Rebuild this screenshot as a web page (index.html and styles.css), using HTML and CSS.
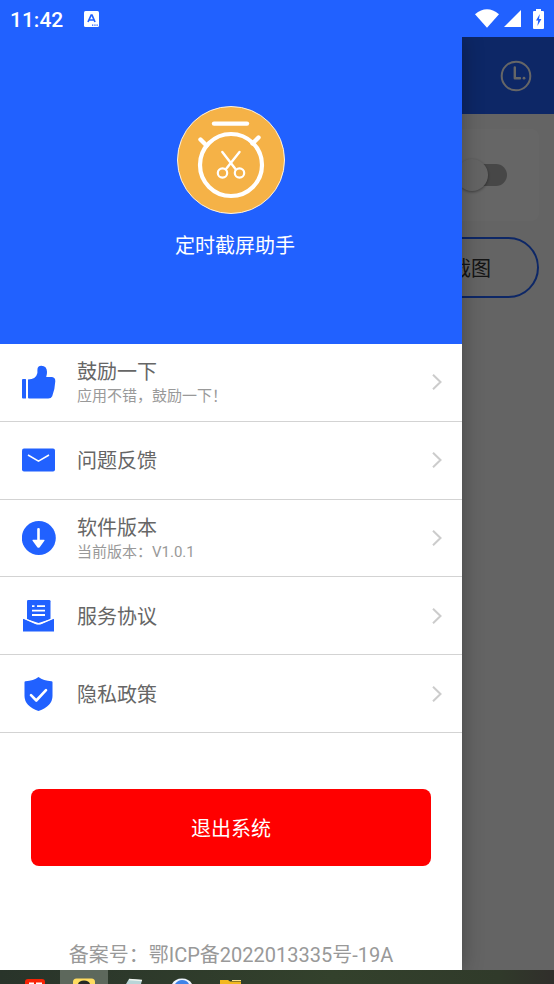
FILE: index.html
```html
<!DOCTYPE html>
<html lang="zh-CN">
<head>
<meta charset="utf-8">
<meta name="viewport" content="width=device-width, initial-scale=1">
<title>定时截屏助手</title>
<link rel="stylesheet" href="styles.css">
</head>
<body>
<div class="status">
  <span class="status-time">11:42</span>
  <svg class="status-app" width="15" height="16" viewBox="0 0 15 16" aria-hidden="true"><rect width="15" height="16" rx="1.5" fill="#fff"/><path d="M4 11L7.2 4h.8L11 11M5 9h5" fill="none" stroke="#2161ff" stroke-width="1.7"/><path d="M8 14.2h1.3M10.3 14.2h1.3M12.5 14.2h1.3" stroke="#2161ff" stroke-width="1.2"/></svg>
  <div class="status-icons">
    <svg width="24" height="19" viewBox="0 0 24 19" aria-hidden="true"><path d="M0 5.2Q12-4.6 24 5.2L12 18.8z" fill="#fff"/></svg>
    <svg width="17" height="17" viewBox="0 0 17 17" aria-hidden="true"><path d="M17 0v17H0z" fill="#fff"/></svg>
    <svg class="battery" width="11" height="20" viewBox="0 0 11 20" aria-hidden="true"><path d="M3 0h5v2h2q1 0 1 1v16q0 1-1 1H1q-1 0-1-1V3q0-1 1-1h2z" fill="#fff"/><path d="M6.8 5L3 11.5h2.2L4.4 17 8.4 10H6z" fill="#2161ff"/></svg>
  </div>
</div>

<div class="stage">
  <div class="page">
    <header class="page-bar">
      <button class="clock" type="button" aria-label="定时">
        <svg width="32" height="32" viewBox="0 0 32 32" aria-hidden="true"><g fill="none" stroke="#fff" stroke-width="2"><circle cx="16" cy="16" r="14.3"/><path d="M14.8 7.5v10.7H20" stroke-width="2.4" stroke-linecap="round" stroke-linejoin="round"/></g><circle cx="24" cy="18.2" r="1.4" fill="#fff"/></svg>
      </button>
    </header>
    <main class="page-body">
      <div class="card"><input class="switch" type="checkbox" role="switch" aria-label="开关"></div>
      <button class="capture" type="button">截图</button>
    </main>
  </div>
  <div class="scrim"></div>

  <aside class="drawer">
    <div class="profile">
      <svg width="108" height="108" viewBox="0 0 108 108" aria-hidden="true">
        <circle cx="54" cy="54" r="53.5" fill="#f5b247" stroke="#fff3df"/>
        <g fill="none" stroke="#fff" stroke-linecap="round">
          <path d="M37 17.6h33" stroke-width="4.4"/>
          <path d="M23.500 33.500l6 6M81.500 31.500l-6 6" stroke-width="4.400"/>
          <circle cx="54" cy="59" r="31" stroke-width="4.2"/>
          <path d="M45.300 46L58.500 63M62.500 46L49 63" stroke-width="2.4"/>
          <circle cx="45.500" cy="67" r="4.700" stroke-width="2.2"/>
          <circle cx="62.500" cy="67" r="4.700" stroke-width="2.2"/>
        </g>
      </svg>
      <h1 class="app-name">定时截屏助手</h1>
    </div>

    <nav class="menu">
      <a class="row" href="#rate">
        <svg class="row-icon" width="34" height="34" viewBox="0 0 34 34" aria-hidden="true"><path d="M1 14h2.600q.4 0 .4.4v18.600q0 .5-.5.500H1q-1 0-1-1V15q0-1 1-1zM6 14.500q8 0 9.400-6.500V5q0-4.200 4-4.200 5.400 0 5.600 6 .1 2.500-.8 5.200H30q3.400.6 3.300 4.200-.4 8.500-3.100 15-1 2.200-4 2.300H7q-1 0-1-1z" fill="#2161ff"/></svg>
        <span class="row-text"><span class="row-title">鼓励一下</span><span class="row-note">应用不错，鼓励一下！</span></span>
        <svg class="chevron" width="10" height="16" viewBox="0 0 10 16" aria-hidden="true"><path d="M1 .8L8.500 8 1 15.200"/></svg>
      </a>
      <a class="row" href="#feedback">
        <svg class="row-icon" width="34" height="34" viewBox="0 0 34 34" aria-hidden="true"><rect y="5.500" width="33" height="23" rx="2" fill="#2161ff"/><path d="M6 12l10.500 6.200L27 12" fill="none" stroke="#fff" stroke-width="1.500"/></svg>
        <span class="row-text"><span class="row-title">问题反馈</span></span>
        <svg class="chevron" width="10" height="16" viewBox="0 0 10 16" aria-hidden="true"><path d="M1 .8L8.500 8 1 15.200"/></svg>
      </a>
      <a class="row" href="#version">
        <svg class="row-icon" width="34" height="34" viewBox="0 0 34 34" aria-hidden="true"><circle cx="16.800" cy="17" r="17" fill="#2161ff"/><path d="M15.200 8q0-1 1.300-1t1.300 1v10.800h4.400q.7.300.2 1l-4.700 6.400q-1.200 1.200-2.400 0l-4.700-6.400q-.5-.7.200-1h4.400z" fill="#fff"/></svg>
        <span class="row-text"><span class="row-title">软件版本</span><span class="row-note">当前版本：V1.0.1</span></span>
        <svg class="chevron" width="10" height="16" viewBox="0 0 10 16" aria-hidden="true"><path d="M1 .8L8.500 8 1 15.200"/></svg>
      </a>
      <a class="row" href="#terms">
        <svg class="row-icon" width="34" height="34" viewBox="0 0 34 34" aria-hidden="true"><path d="M6.200 1h21q1.300 0 1.300 1.300v18l-12 3.700L5 20.300v-18Q5 1 6.200 1z" fill="#2161ff"/><path d="M1 20.500q0-1 1-.7l11.500 5q3 1 6 0l11.500-5q1-.3 1 .7v12H1z" fill="#2161ff"/><path d="M1 19l12.500 5.300q3 1 6 0L32 19" fill="none" stroke="#fff" stroke-width="1.300"/><path d="M10 7.200h2.500M15 7.200h8M10 11.600h13M10 16h13" stroke="#fff" stroke-width="1.800"/></svg>
        <span class="row-text"><span class="row-title">服务协议</span></span>
        <svg class="chevron" width="10" height="16" viewBox="0 0 10 16" aria-hidden="true"><path d="M1 .8L8.500 8 1 15.200"/></svg>
      </a>
      <a class="row" href="#privacy">
        <svg class="row-icon" width="34" height="34" viewBox="0 0 34 34" aria-hidden="true"><path d="M16.500 0q5 4 13 4.200 1 0 1 1V19q0 10-14 15Q2.500 29 2.500 19V5.200q0-1 1-1Q11.500 4 16.500 0z" fill="#2161ff"/><path d="M9 18.200l5.300 5.300 9.700-10.300" fill="none" stroke="#fff" stroke-width="2.600" stroke-linecap="round" stroke-linejoin="round"/></svg>
        <span class="row-text"><span class="row-title">隐私政策</span></span>
        <svg class="chevron" width="10" height="16" viewBox="0 0 10 16" aria-hidden="true"><path d="M1 .8L8.500 8 1 15.200"/></svg>
      </a>
    </nav>

    <button class="exit" type="button">退出系统</button>
    <p class="record">备案号：鄂ICP备2022013335号-19A</p>
  </aside>
</div>

<footer class="taskbar">
  <svg class="task" width="48" height="14" viewBox="0 0 48 14" aria-hidden="true"><path d="M13 14v-2q0-3 3-3h14q3 0 3 3v2z" fill="#f82305"/><path d="M17 13.300h5M24 13.300h6" stroke="#fff" stroke-width="1.500"/></svg>
  <svg class="task task-active" width="48" height="14" viewBox="0 0 48 14" aria-hidden="true"><path d="M13 14v-2q0-3.500 3.500-3.500h15q3.500 0 3.500 3.500v2z" fill="#ffdc60"/><path d="M18 14q1-3.500 6-3.500t6 3.500z" fill="#252a25"/></svg>
  <svg class="task" width="48" height="14" viewBox="0 0 48 14" aria-hidden="true"><path d="M21 9l13 1-1 4H18z" fill="#b9d5d8"/><path d="M21 9.500l13 1" stroke="#f0f4ef" stroke-width="1.500"/></svg>
  <svg class="task" width="48" height="14" viewBox="0 0 48 14" aria-hidden="true"><path d="M16 14q3-5.500 10-5.500T36 14z" fill="#eef5ff"/><path d="M19 14q3-4 7-4 5 0 7 4z" fill="#3e83e8"/></svg>
  <svg class="task" width="48" height="14" viewBox="0 0 48 14" aria-hidden="true"><path d="M16 10h8l2 1.500h11V14H16z" fill="#f2b81f"/><path d="M28 10.500h9" stroke="#ffe28a"/></svg>
</footer>
</body>
</html>
```

FILE: styles.css
```css
* { box-sizing: border-box; }

body {
  margin: 0;
  min-height: 100vh;
  display: flex;
  flex-direction: column;
  font-family: Roboto, "Noto Sans CJK SC", sans-serif;
  font-size: 20px;
  color: #666;
  background: #2161ff;
}

svg { display: block; flex: none; }
button { font: inherit; border: 0; padding: 0; cursor: pointer; }

.status {
  display: flex;
  align-items: center;
  height: 37px;
  padding: 0 10px;
  color: #fff;
}
.status-time { font-size: 21px; font-weight: 500; line-height: 36px; padding-top: 2px; }
.status-app { margin-left: 21px; }
.status-icons {
  display: flex;
  align-items: center;
  gap: 5px;
  margin-left: auto;
}
.battery { margin-left: 7px; }

.stage {
  position: relative;
  flex: 1;
  display: flex;
  overflow: hidden;
}

.page { flex: 1; background: #f9f9f9; }
.page-bar {
  display: flex;
  align-items: center;
  justify-content: flex-end;
  height: 77px;
  padding: 0 22px;
  background: #2161ff;
}
.clock { background: none; }
.page-body {
  display: flex;
  flex-direction: column;
  gap: 16px;
  padding: 15px;
}
.card {
  display: flex;
  align-items: center;
  justify-content: flex-end;
  height: 92px;
  padding: 0 32px;
  border-radius: 8px;
  background: #fff;
}
.switch {
  appearance: none;
  display: flex;
  align-items: center;
  width: 44px;
  height: 22px;
  margin: 0;
  border-radius: 11px;
  background: #b2b2b2;
}
.switch::before {
  content: "";
  flex: none;
  width: 32px;
  height: 32px;
  margin-left: -7px;
  border-radius: 50%;
  background: #fafafa;
  box-shadow: 0 1px 3px rgba(0, 0, 0, .4);
}
.capture {
  height: 61px;
  padding-right: 46px;
  border: 2px solid #2161ff;
  border-radius: 31px;
  background: none;
  color: #333;
  text-align: right;
}

.scrim {
  position: absolute;
  inset: 0;
  background: rgba(0, 0, 0, .6);
}

.drawer {
  position: absolute;
  inset: 0 auto 0 0;
  width: 83.4%;
  display: flex;
  flex-direction: column;
  background: #fff;
  box-shadow: 0 0 20px rgba(0, 0, 0, .3);
}
.profile {
  display: flex;
  flex-direction: column;
  align-items: center;
  gap: 16px;
  height: 307px;
  padding-top: 69px;
  background: #2161ff;
}
.app-name {
  margin: 0;
  padding-left: 8px;
  font-size: 20px;
  font-weight: 400;
  line-height: 32px;
  color: #fff;
}

.menu {
  display: grid;
  grid-auto-rows: 1fr;
  height: 389px;
}
.row {
  display: flex;
  align-items: center;
  padding: 0 20px 0 22px;
  border-bottom: 1px solid #d3d3d3;
  color: #666;
  text-decoration: none;
}
.row-text {
  display: flex;
  flex-direction: column;
  flex: 1;
  padding: 2px 0 0 21px;
}
.row-title { line-height: 26px; }
.row-note { font-size: 15px; line-height: 22px; color: #999; }
.chevron { fill: none; stroke: #ccc; stroke-width: 2; }

.exit {
  height: 77px;
  margin: 56px 31px 0;
  border-radius: 8px;
  background: #f00;
  color: #fff;
}
.record {
  margin: auto 0 0;
  line-height: 30px;
  text-align: center;
  color: #999;
}

.taskbar {
  display: flex;
  height: 14px;
  padding-left: 12px;
  background: linear-gradient(90deg, #29342a, #33412c 60%, #303a2a 90%, #302e2b);
}
.task-active { background: #5d685c; }
```
